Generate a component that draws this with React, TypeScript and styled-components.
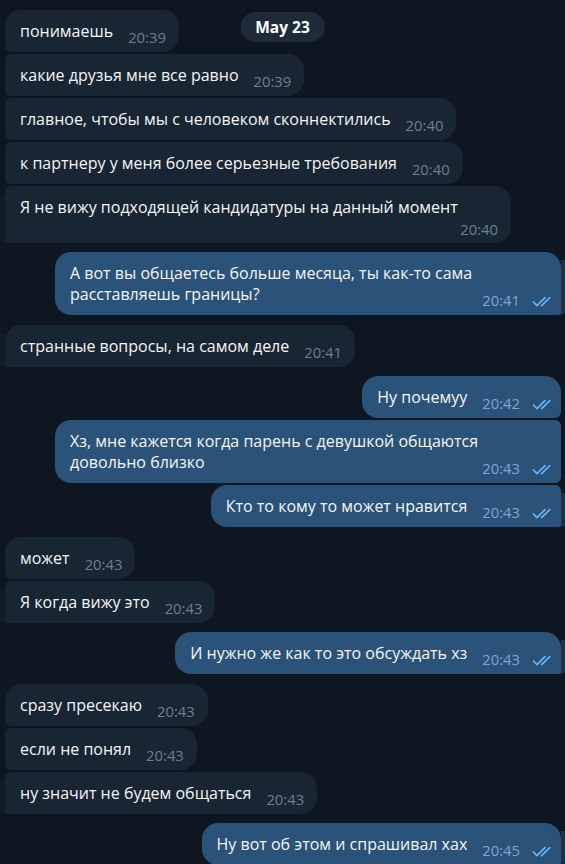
import React from 'react';
import styled, { createGlobalStyle, css } from 'styled-components';

type Pos = 'single' | 'first' | 'middle' | 'last';

const GlobalStyle = createGlobalStyle`
  html, body {
    margin: 0;
    padding: 0;
    background: #0e1621;
  }
  body {
    font-family: "Open Sans", "Noto Sans", "DejaVu Sans", sans-serif;
    -webkit-font-smoothing: antialiased;
  }
`;

const Chat = styled.div`
  position: relative;
  box-sizing: border-box;
  width: 565px;
  height: 864px;
  overflow: hidden;
  background: #0e1621;
  display: flex;
  flex-direction: column;
  gap: 9.5px;
  padding: 0 4px 0 5px;
`;

const PrevEdge = styled.div`
  align-self: flex-end;
  width: 380px;
  height: 1px;
  background: #2b5278;
`;

const DatePill = styled.div`
  position: absolute;
  top: 12px;
  left: 50%;
  transform: translateX(-50%);
  height: 30px;
  padding: 0 15px;
  border-radius: 15px;
  background: #1e2c3a;
  color: #ffffff;
  font-weight: 700;
  font-size: 15.5px;
  line-height: 30px;
  white-space: nowrap;
`;

const Group = styled.div<{ $out?: boolean }>`
  display: flex;
  flex-direction: column;
  gap: 2px;
  align-items: ${p => (p.$out ? 'flex-end' : 'flex-start')};
`;

const BIG = 16;
const SMALL = 6;

const radius = (out: boolean, pos: Pos) => {
  const top = pos === 'single' || pos === 'first' ? BIG : SMALL;
  const bottom = pos === 'single' || pos === 'last' ? 2 : SMALL;
  return out
    ? `${BIG}px ${top}px ${bottom}px ${BIG}px`
    : `${top}px ${BIG}px ${BIG}px ${bottom}px`;
};

const Bubble = styled.div<{ $out?: boolean; $pos: Pos; $full?: boolean }>`
  position: relative;
  display: flow-root;
  box-sizing: border-box;
  width: ${p => (p.$full ? '506px' : 'fit-content')};
  max-width: 506px;
  padding: 11px ${p => (p.$out ? 9 : 13)}px 10px 15px;
  background: ${p => (p.$out ? '#2b5278' : '#182533')};
  color: #f5f5f5;
  font-size: 16px;
  line-height: 21px;
  border-radius: ${p => radius(!!p.$out, p.$pos)};

  ${p =>
    (p.$pos === 'single' || p.$pos === 'last') &&
    css`
      &::before {
        content: '';
        position: absolute;
        top: 8px;
        bottom: 0;
        width: 5px;
        ${p.$out
          ? css`
              right: -5px;
              background: #1a3047;
              border-radius: 0 0 5px 0;
            `
          : css`
              left: -5px;
              background: #121c27;
              border-radius: 0 0 0 5px;
            `}
      }
    `}
`;

const Meta = styled.span<{ $out?: boolean; $stack?: boolean }>`
  display: inline-flex;
  align-items: center;
  gap: 12px;
  white-space: nowrap;
  font-size: 14.8px;
  line-height: 15px;
  color: ${p => (p.$out ? '#7da8d3' : '#6d7f8f')};
  ${p =>
    p.$stack
      ? css`
          display: flex;
          justify-content: flex-end;
          margin: 4px 0 -4px;
        `
      : css`
          float: right;
          margin: 9px 0 -3px 15px;
        `}
`;

const Checks = styled.svg`
  width: 20px;
  height: 11px;
  flex: none;
  margin-top: 1px;
`;

const DoubleCheck = () => (
  <Checks viewBox="0 0 20 11" fill="none" stroke="#6ab4f4" strokeWidth="1.7" strokeLinecap="round" strokeLinejoin="round">
    <path d="M1.5 6 L5 9.6 L13 1.6" />
    <path d="M9.6 9.6 L17.8 1.6" />
  </Checks>
);

type Msg = {
  lines: string[];
  time: string;
  full?: boolean;
  stack?: boolean;
};

type G = { out?: boolean; msgs: Msg[] };

const groups: G[] = [
  {
    msgs: [
      { lines: ['понимаешь'], time: '20:39' },
      { lines: ['какие друзья мне все равно'], time: '20:39' },
      { lines: ['главное, чтобы мы с человеком сконнектились'], time: '20:40' },
      { lines: ['к партнеру у меня более серьезные требования'], time: '20:40' },
      { lines: ['Я не вижу подходящей кандидатуры на данный момент'], time: '20:40', full: true, stack: true },
    ],
  },
  {
    out: true,
    msgs: [
      { lines: ['А вот вы общаетесь больше месяца, ты как-то сама', 'расставляешь границы?'], time: '20:41', full: true },
    ],
  },
  { msgs: [{ lines: ['странные вопросы, на самом деле'], time: '20:41' }] },
  {
    out: true,
    msgs: [
      { lines: ['Ну почемуу'], time: '20:42' },
      { lines: ['Хз, мне кажется когда парень с девушкой общаются', 'довольно близко'], time: '20:43', full: true },
      { lines: ['Кто то кому то может нравится'], time: '20:43' },
    ],
  },
  {
    msgs: [
      { lines: ['может'], time: '20:43' },
      { lines: ['Я когда вижу это'], time: '20:43' },
    ],
  },
  { out: true, msgs: [{ lines: ['И нужно же как то это обсуждать хз'], time: '20:43' }] },
  {
    msgs: [
      { lines: ['сразу пресекаю'], time: '20:43' },
      { lines: ['если не понял'], time: '20:43' },
      { lines: ['ну значит не будем общаться'], time: '20:43' },
    ],
  },
  { out: true, msgs: [{ lines: ['Ну вот об этом и спрашивал хах'], time: '20:45' }] },
];

const posOf = (i: number, n: number): Pos =>
  n === 1 ? 'single' : i === 0 ? 'first' : i === n - 1 ? 'last' : 'middle';

export default function App() {
  return (
    <>
      <GlobalStyle />
      <Chat>
        <PrevEdge />
        {groups.map((g, gi) => (
          <Group key={gi} $out={g.out}>
            {g.msgs.map((m, mi) => (
              <Bubble key={mi} $out={g.out} $pos={posOf(mi, g.msgs.length)} $full={m.full}>
                {m.lines.map((l, li) => (
                  <React.Fragment key={li}>
                    {li > 0 && <br />}
                    {l}
                  </React.Fragment>
                ))}
                <Meta $out={g.out} $stack={m.stack}>
                  {m.time}
                  {g.out && <DoubleCheck />}
                </Meta>
              </Bubble>
            ))}
          </Group>
        ))}
        <DatePill>May 23</DatePill>
      </Chat>
    </>
  );
}
